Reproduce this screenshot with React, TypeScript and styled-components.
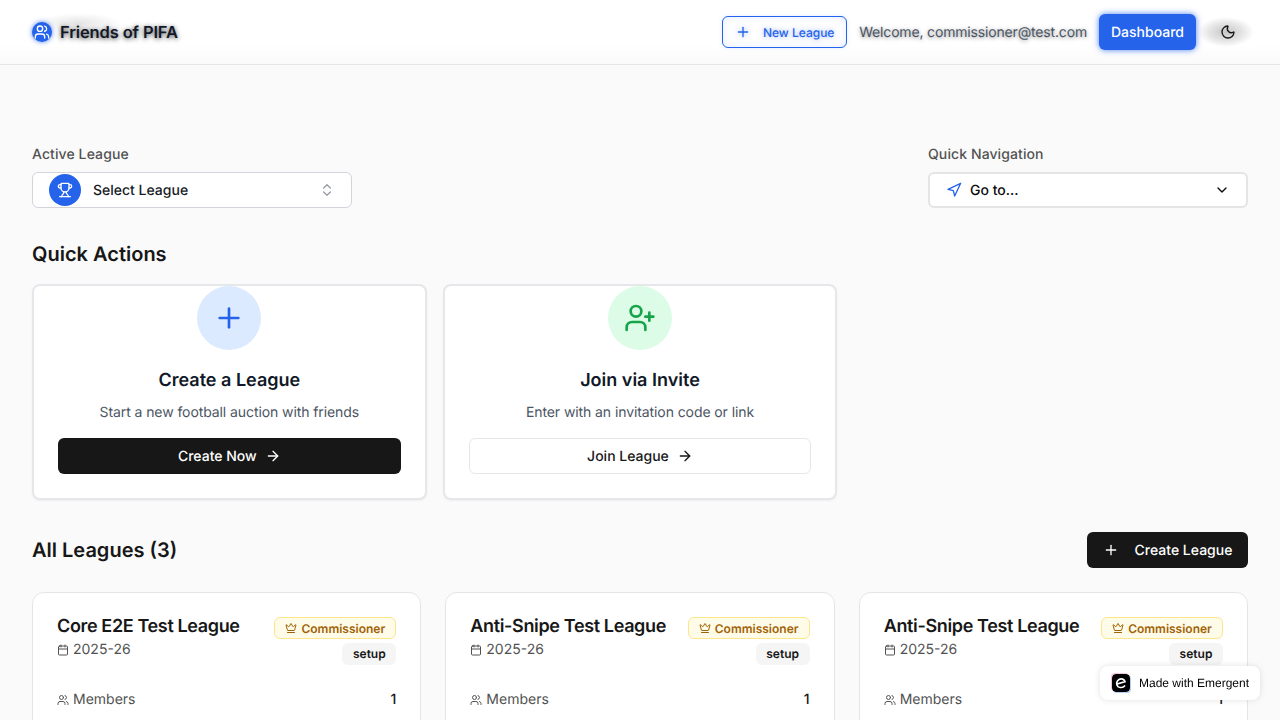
import React from "react";
import styled, { createGlobalStyle } from "styled-components";
import { ArrowRight, Calendar, ChevronDown, ChevronsUpDown, Crown, Moon, Navigation, Plus, Trophy, UserPlus, Users } from "lucide-react";

const Global = createGlobalStyle`
  html, body { margin: 0; padding: 0; height: 720px; overflow: hidden; background: #fafafa; }
  body {
    font-family: Inter, "Liberation Sans", sans-serif;
    color: #171717;
    text-rendering: geometricPrecision;
    -webkit-font-smoothing: antialiased;
  }
  button { text-rendering: geometricPrecision; }
  * { box-sizing: border-box; }
`;

const Header = styled.header`
  height: 65px;
  padding: 0 32px;
  display: flex;
  align-items: center;
  justify-content: space-between;
  background: linear-gradient(to bottom, #ffffff 70%, #fafafa);
  border-bottom: 1px solid #e5e5e5;
`;
const Brand = styled.div`
  display: flex;
  align-items: center;
  gap: 8px;
`;
const LogoCircle = styled.div`
  width: 20px;
  height: 20px;
  border-radius: 50%;
  background: #2563eb;
  color: #fff;
  display: flex;
  align-items: center;
  justify-content: center;
  box-shadow: 0 0 5px rgba(37, 99, 235, 0.8);
`;
const BrandName = styled.span`
  position: relative;
  font-size: 16.5px;
  font-weight: 600;
  letter-spacing: -0.13px;
  color: #111827;
  text-shadow: 0 1px 5px rgba(0, 0, 0, 0.75);
  &::before {
    content: "";
    position: absolute;
    left: -24px;
    top: -9px;
    width: 86px;
    height: 20px;
    background: radial-gradient(closest-side, rgba(0, 0, 0, 0.1), rgba(0, 0, 0, 0));
  }
`;
const HeaderActions = styled.div`
  display: flex;
  align-items: center;
  gap: 12px;
`;
const NewLeagueButton = styled.button`
  width: 125px;
  height: 32px;
  display: flex;
  align-items: center;
  justify-content: center;
  gap: 12px;
  padding: 0;
  background: #fff;
  border: 1px solid #2563eb;
  border-radius: 6px;
  color: #2563eb;
  font: 500 12px Inter, sans-serif;
  text-shadow: 0 0 5px rgba(37, 99, 235, 0.5);
  box-shadow: inset 0 0 8px rgba(37, 99, 235, 0.12), 0 0 4px rgba(37, 99, 235, 0.12);
  svg { filter: drop-shadow(0 0 3px rgba(37, 99, 235, 0.5)); }
`;
const Welcome = styled.span`
  font-size: 14px;
  letter-spacing: -0.165px;
  color: #4b5563;
  text-shadow: 0 1px 4px rgba(0, 0, 0, 0.45);
`;
const DashboardButton = styled.button`
  width: 97px;
  height: 36px;
  padding: 0;
  background: #2563eb;
  border: 0;
  border-radius: 6px;
  color: #fff;
  font: 500 14px Inter, sans-serif;
  box-shadow: 0 0 6px rgba(37, 99, 235, 0.8);
`;
const ThemeButton = styled.button`
  position: relative;
  width: 40px;
  height: 36px;
  padding: 0;
  display: flex;
  align-items: center;
  justify-content: center;
  background: transparent;
  border: 0;
  color: #171717;
  svg { position: relative; }
  &::before {
    content: "";
    position: absolute;
    left: -10px;
    right: -6px;
    top: 3px;
    bottom: 3px;
    background: radial-gradient(closest-side, rgba(0, 0, 0, 0.22), rgba(0, 0, 0, 0.1) 60%, rgba(0, 0, 0, 0));
  }
`;
const Main = styled.main`
  padding: 81px 32px 0;
`;
const SelectorRow = styled.div`
  display: flex;
  justify-content: space-between;
  margin-bottom: 32px;
`;
const Field = styled.div`
  width: 320px;
`;
const FieldLabel = styled.div`
  font-size: 14px;
  line-height: 18px;
  font-weight: 500;
  letter-spacing: 0.1px;
  color: #525252;
  margin-bottom: 8px;
`;
const Trigger = styled.div<{ $thick?: boolean }>`
  height: 36px;
  display: flex;
  align-items: center;
  background: #fff;
  border: ${(p) => (p.$thick ? "2px solid #e5e5e5" : "1px solid #d1d5db")};
  border-radius: 6px;
  font-size: 14px;
  font-weight: 500;
  padding: 0 16px;
  color: ${(p) => (p.$thick ? "#0a0a0a" : "#171b26")};
`;
const TrophyCircle = styled.div`
  width: 32px;
  height: 32px;
  border-radius: 50%;
  background: #2563eb;
  color: #fff;
  display: flex;
  align-items: center;
  justify-content: center;
  margin-right: 12px;
`;
const TriggerText = styled.span<{ $gap?: number }>`
  flex: 1;
  margin-left: ${(p) => p.$gap ?? 0}px;
`;
const SectionTitle = styled.h2`
  margin: 0;
  font-size: 20px;
  line-height: 28px;
  font-weight: 600;
  color: #171717;
`;
const ActionGrid = styled.div`
  display: grid;
  grid-template-columns: repeat(3, 1fr);
  gap: 16px;
  margin: 16px 0 32px;
`;
const ActionCard = styled.div`
  height: 216px;
  padding: 0 24px;
  display: flex;
  flex-direction: column;
  align-items: center;
  background: #fff;
  border: 2px solid #e5e7eb;
  border-radius: 8px;
  box-shadow: 0 1px 2px rgba(0, 0, 0, 0.05);
`;
const IconCircle = styled.div<{ $bg: string; $fg: string }>`
  width: 64px;
  height: 64px;
  flex: none;
  border-radius: 50%;
  background: ${(p) => p.$bg};
  color: ${(p) => p.$fg};
  display: flex;
  align-items: center;
  justify-content: center;
`;
const ActionTitle = styled.h3`
  margin: 17px 0 8px;
  font-size: 18px;
  line-height: 28px;
  font-weight: 600;
  color: #111827;
`;
const ActionText = styled.p`
  margin: 0 0 15px;
  font-size: 14px;
  line-height: 20px;
  letter-spacing: -0.09px;
  color: #4b5563;
`;
const ActionButton = styled.button<{ $dark?: boolean }>`
  width: 100%;
  height: 36px;
  flex: none;
  display: flex;
  align-items: center;
  justify-content: center;
  gap: 8px;
  border-radius: 6px;
  font: 500 14px Inter, sans-serif;
  background: ${(p) => (p.$dark ? "#171717" : "#fff")};
  color: ${(p) => (p.$dark ? "#fff" : "#171717")};
  border: ${(p) => (p.$dark ? "0" : "1px solid #e5e7eb")};
`;
const SectionHeader = styled.div`
  display: flex;
  align-items: center;
  justify-content: space-between;
  margin-bottom: 24px;
`;
const CreateLeagueButton = styled.button`
  width: 161px;
  height: 36px;
  display: flex;
  align-items: center;
  justify-content: center;
  gap: 16px;
  padding: 0;
  background: #171717;
  color: #fff;
  border: 0;
  border-radius: 6px;
  font: 500 14px Inter, sans-serif;
`;
const LeagueGrid = styled.div`
  display: grid;
  grid-template-columns: repeat(3, 1fr);
  gap: 24px;
`;
const LeagueCard = styled.div`
  height: 200px;
  padding: 24px;
  background: #fff;
  border: 1px solid #e5e5e5;
  border-radius: 12px;
`;
const LeagueTop = styled.div`
  display: flex;
  justify-content: space-between;
  margin-bottom: 25px;
`;
const LeagueName = styled.div`
  font-size: 18px;
  line-height: 20px;
  font-weight: 600;
  letter-spacing: -0.02em;
  color: #171717;
`;
const Season = styled.div`
  display: flex;
  align-items: center;
  gap: 4px;
  margin-top: 3px;
  font-size: 14px;
  line-height: 20px;
  color: #525252;
`;
const Badges = styled.div`
  display: flex;
  flex-direction: column;
  align-items: flex-end;
  gap: 4px;
`;
const CommissionerBadge = styled.span`
  height: 22px;
  width: 122px;
  display: flex;
  align-items: center;
  justify-content: center;
  gap: 4px;
  border: 1px solid #fde68a;
  border-radius: 6px;
  background: #fefce8;
  color: #a16207;
  font-size: 12px;
  font-weight: 600;
`;
const StatusBadge = styled.span`
  height: 22px;
  width: 54px;
  padding-bottom: 1px;
  display: flex;
  align-items: center;
  justify-content: center;
  border-radius: 6px;
  background: #f5f5f5;
  color: #171717;
  font-size: 12px;
  font-weight: 600;
`;
const MetaRow = styled.div`
  display: flex;
  justify-content: space-between;
  font-size: 14px;
  line-height: 20px;
`;
const MetaLabel = styled.span`
  display: flex;
  align-items: center;
  gap: 4px;
  color: #525252;
`;
const MetaValue = styled.span`
  font-weight: 500;
  color: #171717;
`;
const MadeWith = styled.div`
  position: fixed;
  right: 20px;
  bottom: 20px;
  width: 160px;
  height: 34px;
  display: flex;
  align-items: center;
  gap: 9px;
  padding-left: 12px;
  background: #fff;
  border-radius: 8px;
  box-shadow: 0 0 6px rgba(0, 0, 0, 0.12);
  font-family: "Liberation Sans", Arial, sans-serif;
  font-size: 12px;
  color: #000;
`;
const MadeLogo = styled.svg`
  width: 18px;
  height: 18px;
  flex: none;
  border-radius: 4px;
  box-shadow: -1px -1px 0 rgba(236, 72, 153, 0.35), 1px 1px 0 rgba(59, 130, 246, 0.4);
`;

const leagues = ["Core E2E Test League", "Anti-Snipe Test League", "Anti-Snipe Test League"];

export default function App() {
  return (
    <>
      <Global />
      <Header>
        <Brand>
          <LogoCircle><Users size={16} /></LogoCircle>
          <BrandName>Friends of PIFA</BrandName>
        </Brand>
        <HeaderActions>
          <NewLeagueButton><Plus size={16} />New League</NewLeagueButton>
          <Welcome>Welcome, commissioner@test.com</Welcome>
          <DashboardButton>Dashboard</DashboardButton>
          <ThemeButton><Moon size={16} /></ThemeButton>
        </HeaderActions>
      </Header>
      <Main>
        <SelectorRow>
          <Field>
            <FieldLabel>Active League</FieldLabel>
            <Trigger>
              <TrophyCircle><Trophy size={16} /></TrophyCircle>
              <TriggerText>Select League</TriggerText>
              <ChevronsUpDown size={16} color="#6b7280" opacity={0.7} />
            </Trigger>
          </Field>
          <Field>
            <FieldLabel>Quick Navigation</FieldLabel>
            <Trigger $thick>
              <Navigation size={16} color="#2563eb" />
              <TriggerText $gap={8}>Go to...</TriggerText>
              <ChevronDown size={16} />
            </Trigger>
          </Field>
        </SelectorRow>
        <SectionTitle>Quick Actions</SectionTitle>
        <ActionGrid>
          <ActionCard>
            <IconCircle $bg="#dbeafe" $fg="#2563eb"><Plus size={32} /></IconCircle>
            <ActionTitle>Create a League</ActionTitle>
            <ActionText>Start a new football auction with friends</ActionText>
            <ActionButton $dark>Create Now<ArrowRight size={16} /></ActionButton>
          </ActionCard>
          <ActionCard>
            <IconCircle $bg="#dcfce7" $fg="#16a34a"><UserPlus size={32} /></IconCircle>
            <ActionTitle>Join via Invite</ActionTitle>
            <ActionText>Enter with an invitation code or link</ActionText>
            <ActionButton>Join League<ArrowRight size={16} /></ActionButton>
          </ActionCard>
        </ActionGrid>
        <SectionHeader>
          <SectionTitle>All Leagues (3)</SectionTitle>
          <CreateLeagueButton><Plus size={16} />Create League</CreateLeagueButton>
        </SectionHeader>
        <LeagueGrid>
          {leagues.map((name, i) => (
            <LeagueCard key={i}>
              <LeagueTop>
                <div>
                  <LeagueName>{name}</LeagueName>
                  <Season><Calendar size={12} />2025-26</Season>
                </div>
                <Badges>
                  <CommissionerBadge><Crown size={12} />Commissioner</CommissionerBadge>
                  <StatusBadge>setup</StatusBadge>
                </Badges>
              </LeagueTop>
              <MetaRow>
                <MetaLabel><Users size={12} />Members</MetaLabel>
                <MetaValue>1</MetaValue>
              </MetaRow>
            </LeagueCard>
          ))}
        </LeagueGrid>
      </Main>
      <MadeWith>
        <MadeLogo viewBox="0 0 18 18">
          <rect width="18" height="18" rx="4" fill="#000" />
          <path d="M5.2 10 L13 7.6 C12.4 5 9.4 4.2 7 5.4 C4.4 6.8 3.8 10.8 6 12.6 C8 14 11 13.6 12.6 12" fill="none" stroke="#fff" strokeWidth="1.7" strokeLinecap="round" />
        </MadeLogo>
        Made with Emergent
      </MadeWith>
    </>
  );
}
